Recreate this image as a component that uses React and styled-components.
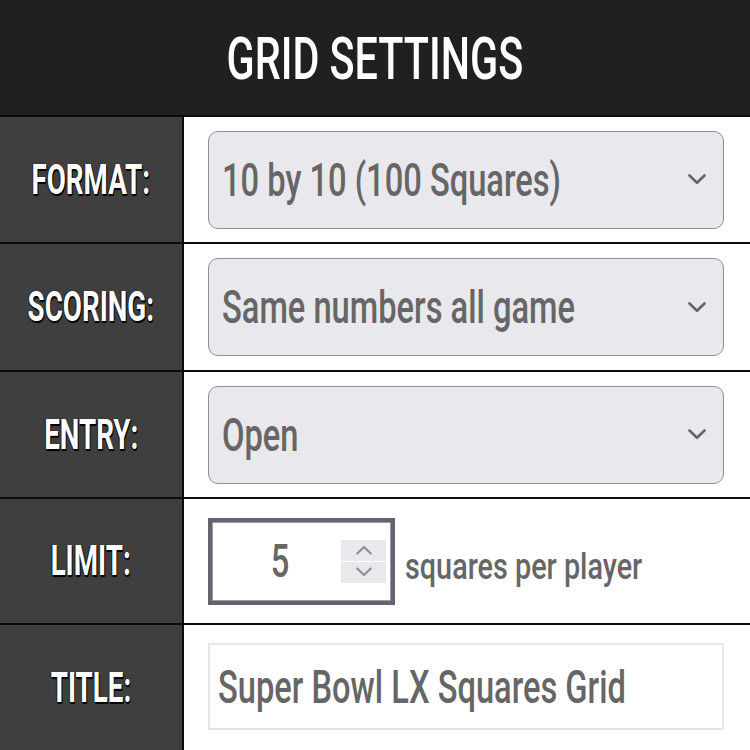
import React from "react";
import styled, { createGlobalStyle } from "styled-components";

const Global = createGlobalStyle`
  html, body { margin: 0; padding: 0; background: #ffffff; }
  body { font-family: Roboto, "Liberation Sans", sans-serif; }
  *, *::before, *::after { box-sizing: border-box; }
`;

const Page = styled.div`
  width: 750px;
  height: 750px;
  overflow: hidden;
  display: flex;
  flex-direction: column;
  background: #ffffff;
`;

const Header = styled.header`
  height: 117px;
  flex: none;
  background: #202020;
  border-bottom: 2px solid #0d0d0d;
  display: flex;
  align-items: center;
  justify-content: center;
`;

const Squeeze = styled.span`
  display: inline-block;
  white-space: nowrap;
  transform: scaleX(${(p) => p.$sx});
  transform-origin: ${(p) => p.$origin || "center"} center;
`;

const Title = styled.h1`
  margin: 0;
  color: #ffffff;
  font-family: Roboto, "Liberation Sans", sans-serif;
  font-weight: 500;
  font-size: 59px;
  line-height: 1;
  padding-top: 1px;
`;

const Row = styled.div`
  flex: none;
  height: ${(p) => p.$h}px;
  display: grid;
  grid-template-columns: 184px minmax(0, 1fr);
  border-bottom: ${(p) => (p.$last ? "none" : "2px solid #0d0d0d")};
`;

const Label = styled.div`
  background: #3f3f3f;
  border-right: 2px solid #0d0d0d;
  display: flex;
  align-items: center;
  justify-content: center;
  color: #ffffff;
  font-family: Roboto, "Liberation Sans", sans-serif;
  font-weight: 700;
  font-size: 42px;
  line-height: 1;
  text-shadow: 1px 1px 0 #000, 1px 2px 1px #000, -1px 0 1px #111;
`;

const Cell = styled.div`
  display: flex;
  align-items: center;
  min-width: 0;
  padding: 0 26px 0 24px;
`;

const SelectBox = styled.div`
  flex: 1 1 0;
  min-width: 0;
  height: 98px;
  background: #e9e8ed;
  border: 1.5px solid #8f8e96;
  border-radius: 10px;
  display: flex;
  align-items: center;
  justify-content: space-between;
  padding: 0 16px 0 13px;
`;

const ValueText = styled.span`
  min-width: 0;
  color: #666666;
  font-family: Roboto, "Liberation Sans", sans-serif;
  font-weight: 500;
  font-size: ${(p) => p.$size || 46}px;
  line-height: 1;
`;

const Chevron = ({ up, color = "#666", w = 20, h = 11, sw = 2.6 }) => (
  <svg width={w} height={h} viewBox="0 0 20 11" fill="none" style={{ flex: "none" }}>
    <path
      d={up ? "M2.5 9.5 L10 2.2 L17.5 9.5" : "M2.5 1.5 L10 8.8 L17.5 1.5"}
      stroke={color}
      strokeWidth={sw}
      strokeLinecap="round"
      strokeLinejoin="round"
    />
  </svg>
);

const NumberBox = styled.div`
  flex: none;
  width: 187px;
  height: 87px;
  border: 4px solid #64636f;
  box-shadow: inset 0 0 0 1px #9b9aa6;
  background: #ffffff;
  display: flex;
  align-items: center;
  padding-right: 5px;
`;

const NumberValue = styled.div`
  flex: 1;
  display: flex;
  justify-content: center;
  padding-left: 8px;
`;

const Spinner = styled.div`
  flex: none;
  width: 45px;
  height: 43px;
  display: flex;
  flex-direction: column;
  gap: 1px;
  background: #ffffff;
`;

const SpinButton = styled.div`
  flex: 1;
  background: #e9e8ed;
  display: flex;
  align-items: center;
  justify-content: center;
`;

const Suffix = styled.div`
  margin-left: 10px;
  display: flex;
  align-items: center;
  padding-top: 12px;
  min-width: 0;
`;

const TextBox = styled.div`
  flex: 1 1 0;
  min-width: 0;
  height: 87px;
  border: 2px solid #e6e6e6;
  display: flex;
  align-items: center;
  padding: 0 0 0 8px;
  margin-top: -2px;
`;

const Select = ({ value }) => (
  <SelectBox>
    <ValueText>
      <Squeeze $sx={0.71} $origin="left">{value}</Squeeze>
    </ValueText>
    <Chevron />
  </SelectBox>
);

const rows = [
  { label: "FORMAT:", kind: "select", value: "10 by 10 (100 Squares)", h: 127 },
  { label: "SCORING:", kind: "select", value: "Same numbers all game", h: 128 },
  { label: "ENTRY:", kind: "select", value: "Open", h: 127 },
  { label: "LIMIT:", kind: "number", value: "5", h: 126 },
  { label: "TITLE:", kind: "text", value: "Super Bowl LX Squares Grid", h: 125 },
];

export default function App() {
  return (
    <>
      <Global />
      <Page>
        <Header>
          <Title>
            <Squeeze $sx={0.7}>GRID SETTINGS</Squeeze>
          </Title>
        </Header>
        {rows.map((r, i) => (
          <Row key={r.label} $h={r.h} $last={i === rows.length - 1}>
            <Label>
              <Squeeze $sx={0.66}>{r.label}</Squeeze>
            </Label>
            <Cell>
              {r.kind === "select" && <Select value={r.value} />}
              {r.kind === "number" && (
                <>
                  <NumberBox>
                    <NumberValue>
                      <ValueText>
                        <Squeeze $sx={0.71}>{r.value}</Squeeze>
                      </ValueText>
                    </NumberValue>
                    <Spinner>
                      <SpinButton>
                        <Chevron up color="#8e8d99" w={18} h={10} sw={2.4} />
                      </SpinButton>
                      <SpinButton>
                        <Chevron color="#8e8d99" w={18} h={10} sw={2.4} />
                      </SpinButton>
                    </Spinner>
                  </NumberBox>
                  <Suffix>
                    <ValueText $size={36}>
                      <Squeeze $sx={0.8} $origin="left">squares per player</Squeeze>
                    </ValueText>
                  </Suffix>
                </>
              )}
              {r.kind === "text" && (
                <TextBox>
                  <ValueText>
                    <Squeeze $sx={0.71} $origin="left">{r.value}</Squeeze>
                  </ValueText>
                </TextBox>
              )}
            </Cell>
          </Row>
        ))}
      </Page>
    </>
  );
}
